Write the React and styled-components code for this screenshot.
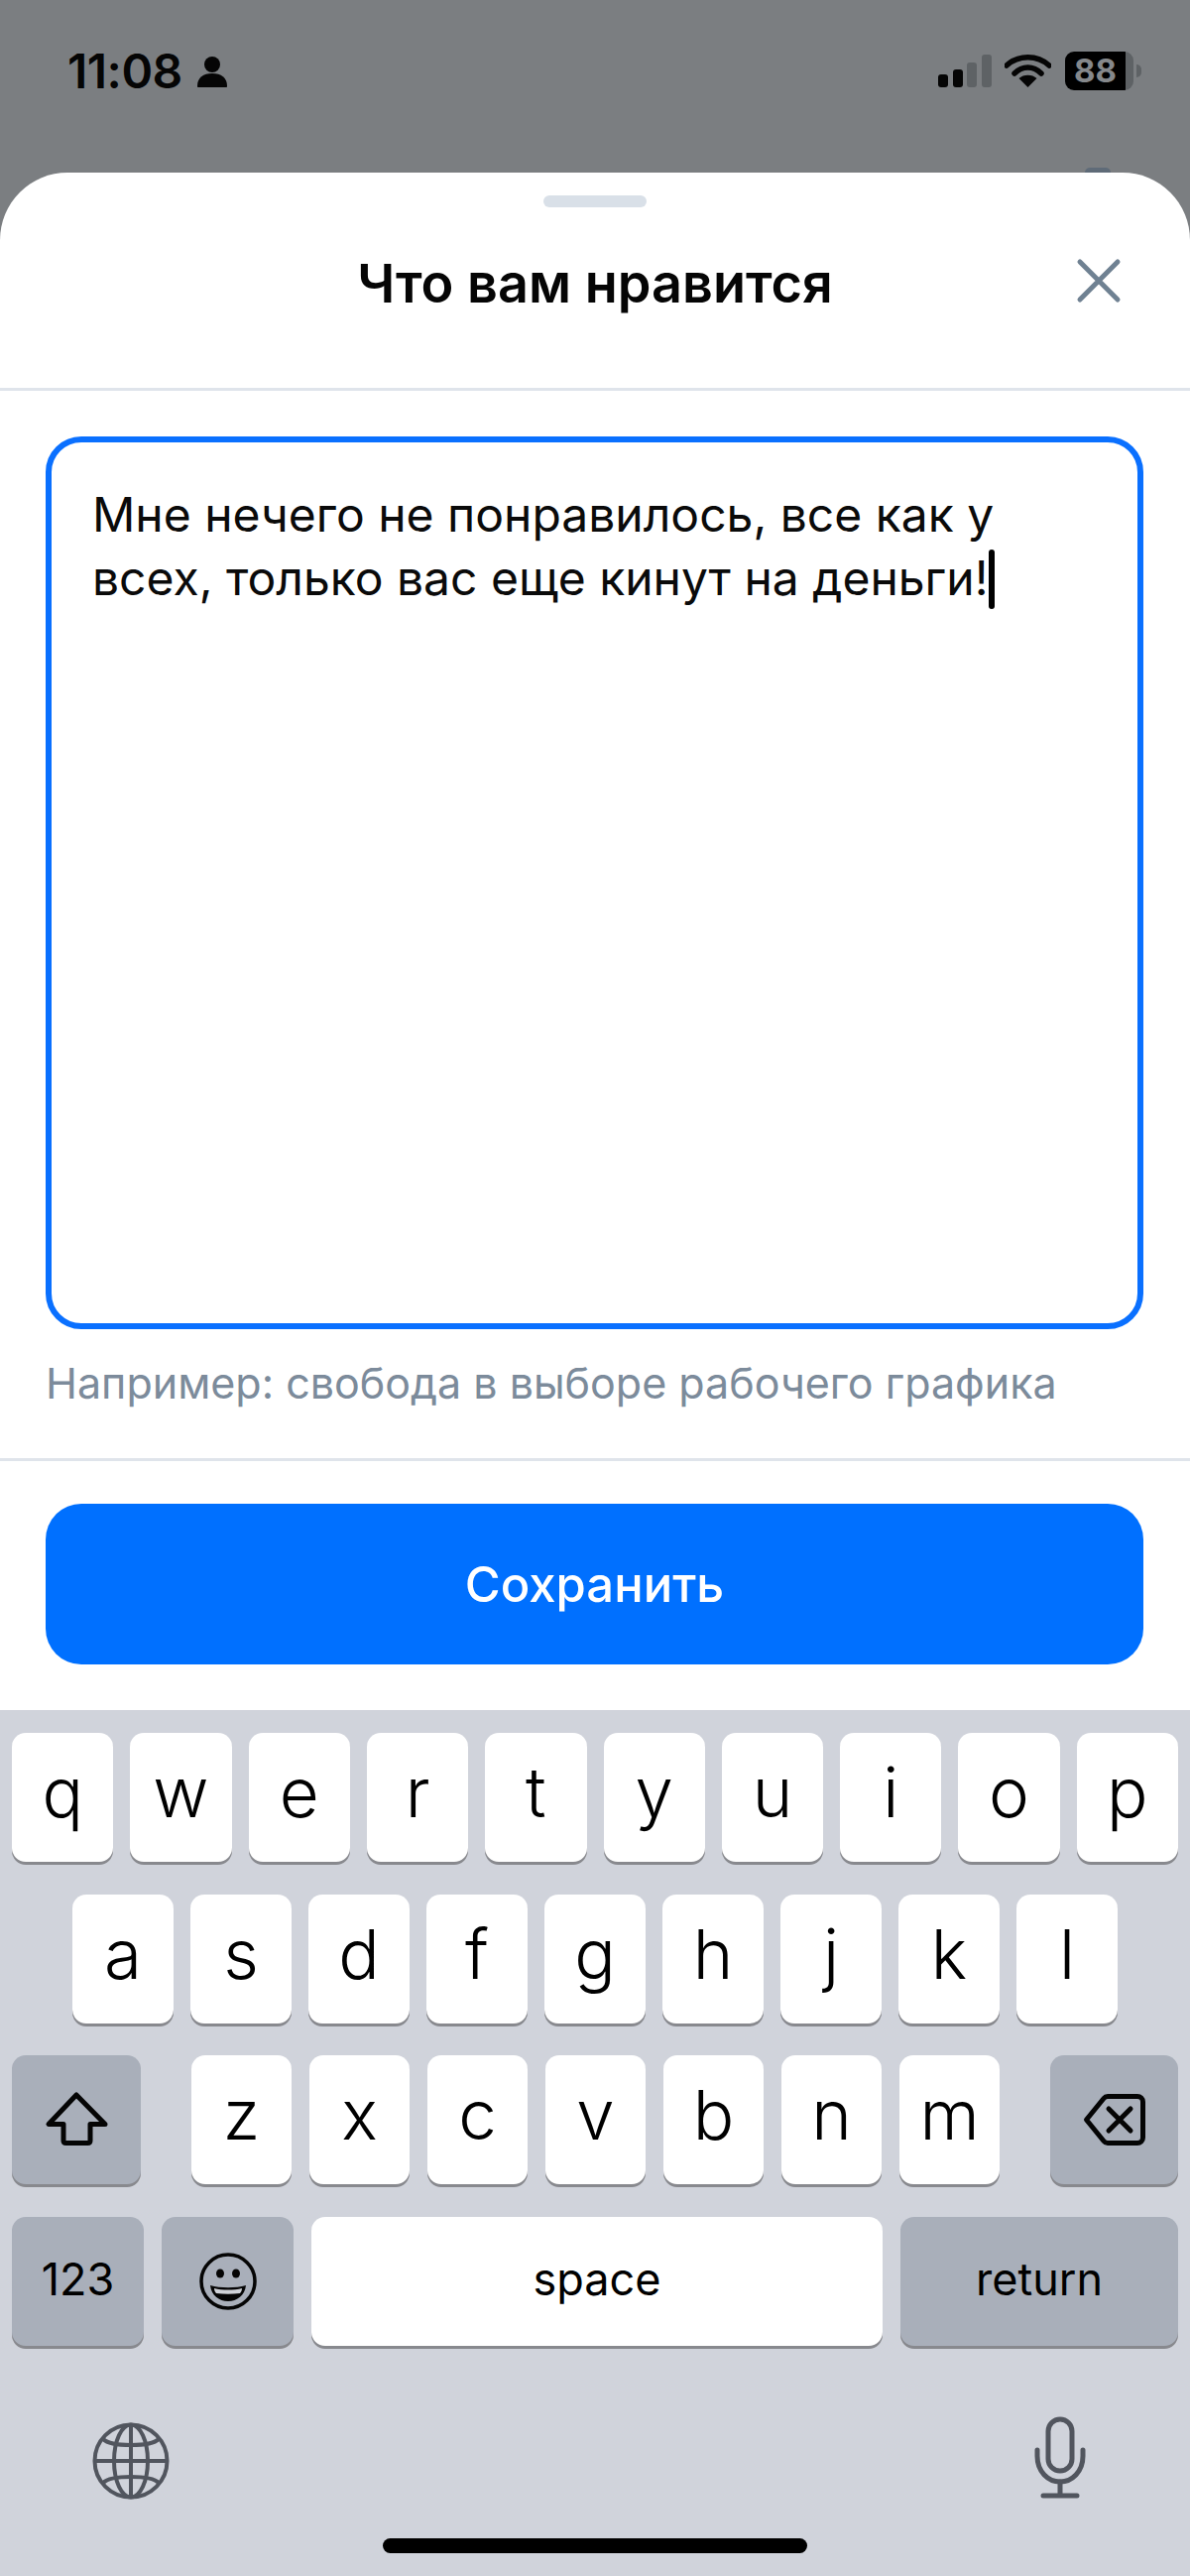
import React from "react";
import styled, { createGlobalStyle } from "styled-components";

const GlobalStyle = createGlobalStyle`
  * { box-sizing: border-box; }
  html, body { margin: 0; padding: 0; background: #7b7e81; }
  body { font-family: Inter, "Noto Sans", "Liberation Sans", sans-serif; }
`;

const Page = styled.div`
  width: 1200px;
  height: 2597px;
  display: flex;
  flex-direction: column;
  overflow: hidden;
  background: #7b7e81;
`;

const StatusBar = styled.div`
  position: relative;
  height: 174px;
  flex: none;
  display: flex;
  justify-content: space-between;
  align-items: flex-start;
  padding: 52px 57px 0 68px;
`;

const PeekBehind = styled.div`
  position: absolute;
  left: 1094px;
  bottom: 0;
  width: 26px;
  height: 5px;
  border-radius: 8px 8px 0 0;
  background: #5f6b78;
`;

const TimeGroup = styled.div`
  display: flex;
  align-items: center;
  gap: 14px;
`;

const Time = styled.span`
  font-size: 48px;
  line-height: 40px;
  font-weight: 600;
  letter-spacing: -0.5px;
  color: #050505;
`;

const StatusIcons = styled.div`
  display: flex;
  align-items: flex-start;
`;

const Signal = styled.svg`
  margin-top: 3px;
  margin-right: 13px;
`;

const Wifi = styled.svg`
  margin-top: 2px;
  margin-right: 14px;
`;

const Battery = styled.div`
  position: relative;
  width: 69px;
  height: 39px;
  border-radius: 9px;
  background: linear-gradient(to right, #000 61px, #5e6265 61px);
  color: #85888b;
  font-size: 33px;
  font-weight: 700;
  line-height: 39px;
  padding-left: 9px;
  &::after {
    content: "";
    position: absolute;
    right: -8px;
    top: 13px;
    width: 5px;
    height: 13px;
    border-radius: 0 5px 5px 0;
    background: #5e6265;
  }
`;

const Sheet = styled.div`
  flex: none;
  height: 1550px;
  background: #fff;
  border-radius: 68px 68px 0 0;
  display: flex;
  flex-direction: column;
  align-items: stretch;
`;

const Grabber = styled.div`
  width: 104px;
  height: 12px;
  margin: 23px auto 0;
  border-radius: 6px;
  background: #d9e0e8;
`;

const Header = styled.div`
  display: grid;
  grid-template-columns: 1fr auto 1fr;
  align-items: center;
  height: 154px;
  margin-bottom: 28px;
  padding-right: 69px;
  padding-left: 69px;
`;

const Title = styled.h1`
  grid-column: 2;
  margin: 0;
  font-size: 54px;
  font-weight: 600;
  line-height: 60px;
  color: #050505;
`;

const CloseIcon = styled.svg`
  grid-column: 3;
  justify-self: end;
  margin-top: -6px;
`;

const Divider = styled.div`
  height: 3px;
  background: #dfe4eb;
  flex: none;
`;

const Body = styled.div`
  flex: 1;
  padding: 46px 47px 0 46px;
  display: flex;
  flex-direction: column;
`;

const TextBox = styled.div`
  height: 900px;
  border: 6px solid #0a70ff;
  border-radius: 36px;
  padding: 41px 50px 0 41px;
  font-size: 48px;
  line-height: 64px;
  color: #0a0a0a;
`;

const Caret = styled.span`
  display: inline-block;
  width: 6px;
  height: 60px;
  margin-left: 1px;
  border-radius: 3px;
  background: #000;
  vertical-align: -14px;
`;

const Hint = styled.p`
  margin: 26px 0 0;
  font-size: 43px;
  line-height: 56px;
  color: #7c8b9b;
`;

const Footer = styled.div`
  flex: none;
  padding: 43px 47px 46px 46px;
`;

const SaveButton = styled.button`
  display: block;
  width: 100%;
  height: 162px;
  border: 0;
  border-radius: 36px;
  background: #0070ff;
  color: #fff;
  font-family: inherit;
  font-size: 49px;
  font-weight: 500;
`;

const Keyboard = styled.div`
  flex: 1;
  background: #d0d3db;
  padding: 23px 12px 23px;
  display: flex;
  flex-direction: column;
`;

const KeyRows = styled.div`
  display: flex;
  flex-direction: column;
  gap: 32.7px;
`;

const KeyRow = styled.div`
  display: flex;
  gap: ${(p) => p.$gap || 17}px;
  justify-content: ${(p) => p.$justify || "center"};
`;

const KeyGroup = styled.div`
  display: flex;
  gap: 17.5px;
`;

const Key = styled.div`
  flex: ${(p) => (p.$grow ? "1" : "none")};
  width: ${(p) => (p.$width ? `${p.$width}px` : "auto")};
  height: 130px;
  display: flex;
  align-items: center;
  justify-content: center;
  border-radius: 14px;
  background: ${(p) => (p.$dark ? "#a9afba" : "#fff")};
  box-shadow: 0 3px 0 #88898e;
  color: #000;
  font-size: ${(p) => (p.$small ? "45px" : "69px")};
  font-weight: ${(p) => (p.$small ? 400 : 300)};
  padding-bottom: ${(p) => (p.$small ? "5px" : "10px")};
`;

const IconKey = styled(Key)`
  padding-bottom: 0;
`;

const BottomIcons = styled.div`
  display: flex;
  justify-content: space-between;
  align-items: flex-start;
  margin-top: 69px;
  padding: 0 89px 0 78px;
`;

const Globe = styled.svg`
  margin-top: 5px;
`;

const HomeBar = styled.div`
  width: 428px;
  height: 15px;
  margin: auto auto 0;
  border-radius: 8px;
  background: #000;
`;

const PersonIcon = () => (
  <svg width="32" height="32" viewBox="0 0 32 32">
    <circle cx="16" cy="9" r="8" fill="#050505" />
    <path d="M1 31c0-9 6-13 15-13s15 4 15 13c0 .6-.4 1-1 1H2c-.6 0-1-.4-1-1z" fill="#050505" />
  </svg>
);

const SignalIcon = () => (
  <Signal width="54" height="34" viewBox="0 0 54 34">
    <rect x="0" y="20" width="10" height="13" rx="3" fill="#050505" />
    <rect x="15" y="15" width="10" height="18" rx="3" fill="#050505" />
    <rect x="29" y="8" width="10" height="25" rx="3" fill="#5e6265" />
    <rect x="44" y="0" width="10" height="33" rx="3" fill="#5e6265" />
  </Signal>
);

const WifiIcon = () => (
  <Wifi width="47" height="34" viewBox="0 0 47 34">
    <path d="M2 12C14 1 33 1 45 12" fill="none" stroke="#050505" strokeWidth="5.5" strokeLinecap="round" />
    <path d="M10 20C18 12 29 12 37 20" fill="none" stroke="#050505" strokeWidth="5.5" strokeLinecap="round" />
    <path d="M23.5 34L14.5 25C19 20.5 28 20.5 32.5 25z" fill="#050505" />
  </Wifi>
);

const ShiftIcon = () => (
  <svg width="70" height="60" viewBox="0 0 70 60" fill="none" stroke="#050505" strokeWidth="5" strokeLinejoin="round">
    <path d="M35 5L7 34.5H22V51C22 52.5 23 53.5 24.5 53.5H46.5C48 53.5 49 52.5 49 51V34.5H64z" />
  </svg>
);

const BackspaceIcon = () => (
  <svg width="70" height="58" viewBox="0 0 70 58" fill="none" stroke="#050505" strokeWidth="5" strokeLinejoin="round" strokeLinecap="round">
    <path d="M6.5 29L24 7.5C25 6.2 26 5.5 28 5.5H58C61 5.5 63.5 8 63.5 11V47C63.5 50 61 52.5 58 52.5H28C26 52.5 25 51.8 24 50.5z" />
    <path d="M29 18L51 40M51 18L29 40" />
  </svg>
);

const EmojiIcon = () => (
  <svg width="60" height="60" viewBox="0 0 60 60">
    <circle cx="30" cy="30" r="27" fill="none" stroke="#050505" strokeWidth="3.5" />
    <ellipse cx="22" cy="22" rx="4" ry="4.5" fill="#050505" />
    <ellipse cx="38" cy="22" rx="4" ry="4.5" fill="#050505" />
    <path d="M12 34C22 37 38 37 48 34C47 44 39 50 30 50C21 50 13 44 12 34z" fill="#050505" />
    <path d="M16 37C24 39 36 39 44 37C44 39 43 41 42 42C34 43 26 43 18 42C17 41 16 39 16 37z" fill="#cfd2d8" />
  </svg>
);

const GlobeIcon = () => (
  <Globe width="84" height="84" viewBox="0 0 84 84" fill="none" stroke="#51555e" strokeWidth="4">
    <circle cx="42" cy="42" r="36.5" />
    <ellipse cx="42" cy="42" rx="17" ry="36.5" />
    <path d="M42 5.5V78.5M5.5 42H78.5" />
    <path d="M14 20C22 28 62 28 70 20" />
    <path d="M14 64C22 56 62 56 70 64" />
  </Globe>
);

const MicIcon = () => (
  <svg width="60" height="90" viewBox="0 0 60 90" fill="none" stroke="#51555e" strokeWidth="5" strokeLinecap="round">
    <rect x="18" y="5" width="24" height="52" rx="12" />
    <path d="M7 36V42C7 58 18 68 30 68C42 68 53 58 53 42V36" />
    <path d="M30 68V82M13 82H47" />
  </svg>
);

const row1 = ["q", "w", "e", "r", "t", "y", "u", "i", "o", "p"];
const row2 = ["a", "s", "d", "f", "g", "h", "j", "k", "l"];
const row3 = ["z", "x", "c", "v", "b", "n", "m"];

const App = () => {
  return (
    <>
      <GlobalStyle />
      <Page>
        <StatusBar>
          <TimeGroup>
            <Time>11:08</Time>
            <PersonIcon />
          </TimeGroup>
          <StatusIcons>
            <SignalIcon />
            <WifiIcon />
            <Battery>88</Battery>
          </StatusIcons>
          <PeekBehind />
        </StatusBar>
        <Sheet>
          <Grabber />
          <Header>
            <Title>Что вам нравится</Title>
            <CloseIcon width="46" height="46" viewBox="0 0 46 46" fill="none" stroke="#6f8192" strokeWidth="5" strokeLinecap="round">
              <path d="M4 4L42 42M42 4L4 42" />
            </CloseIcon>
          </Header>
          <Divider />
          <Body>
            <TextBox>
              Мне нечего не понравилось, все как у всех, только вас еще кинут на деньги!<Caret />
            </TextBox>
            <Hint>Например: свобода в выборе рабочего графика</Hint>
          </Body>
          <Divider />
          <Footer>
            <SaveButton>Сохранить</SaveButton>
          </Footer>
        </Sheet>
        <Keyboard>
          <KeyRows>
            <KeyRow>
              {row1.map((k) => (
                <Key key={k} $grow>{k}</Key>
              ))}
            </KeyRow>
            <KeyRow $gap={17.5}>
              {row2.map((k) => (
                <Key key={k} $width={101.5}>{k}</Key>
              ))}
            </KeyRow>
            <KeyRow $justify="space-between">
              <IconKey $dark $width={130}><ShiftIcon /></IconKey>
              <KeyGroup>
                {row3.map((k) => (
                  <Key key={k} $width={101.5}>{k}</Key>
                ))}
              </KeyGroup>
              <IconKey $dark $width={129}><BackspaceIcon /></IconKey>
            </KeyRow>
            <KeyRow $gap={18}>
              <Key $dark $small $width={133}>123</Key>
              <IconKey $dark $width={133}><EmojiIcon /></IconKey>
              <Key $small $grow>space</Key>
              <Key $dark $small $width={280}>return</Key>
            </KeyRow>
          </KeyRows>
          <BottomIcons>
            <GlobeIcon />
            <MicIcon />
          </BottomIcons>
          <HomeBar />
        </Keyboard>
      </Page>
    </>
  );
};

export default App;
